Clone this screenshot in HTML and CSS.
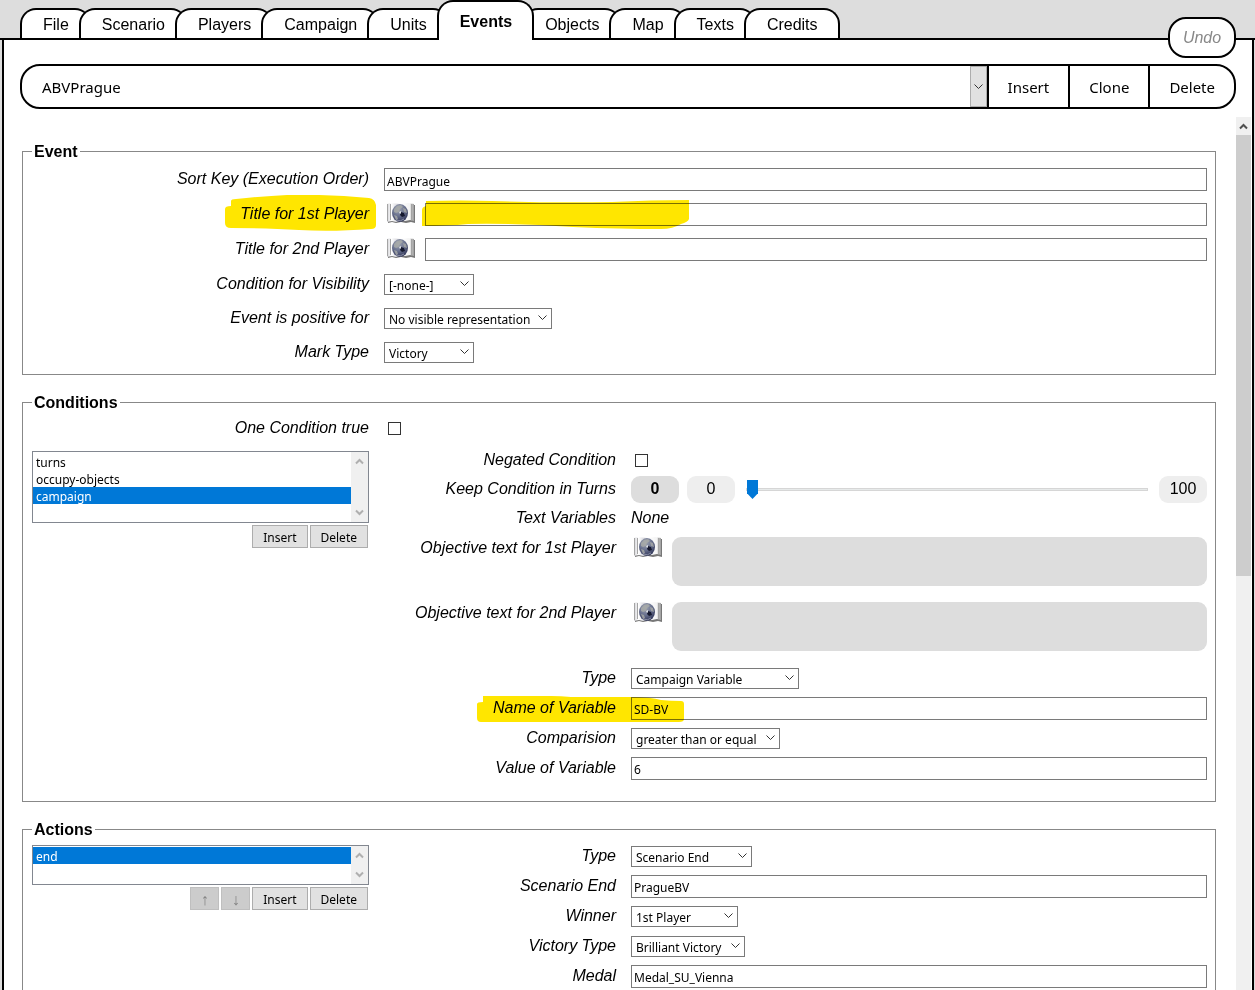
FILE: index.html
```
<!DOCTYPE html>
<html lang="en">
<head>
    <meta charset="UTF-8">
    <meta name="viewport" content="width=device-width, initial-scale=1.0">
    <title>Scenario Editor - Events</title>
    <link rel="stylesheet" href="styles.css">
</head>
<body>
    <!-- shared book icon -->
    <svg class="defs" width="0" height="0" aria-hidden="true">
        <defs>
            <linearGradient id="page-left" x1="0" x2="1" y1="0" y2="0">
                <stop offset="0" stop-color="#d2d2d6"/>
                <stop offset="0.35" stop-color="#ffffff"/>
                <stop offset="1" stop-color="#c4c4cc"/>
            </linearGradient>
            <linearGradient id="page-right" x1="0" x2="1" y1="0" y2="0">
                <stop offset="0" stop-color="#ffffff"/>
                <stop offset="0.7" stop-color="#f4f4f4"/>
                <stop offset="1" stop-color="#8c8c8c"/>
            </linearGradient>
            <radialGradient id="globe" cx="0.4" cy="0.25" r="0.8">
                <stop offset="0" stop-color="#a3a8b4"/>
                <stop offset="0.5" stop-color="#6b7390"/>
                <stop offset="1" stop-color="#2c3154"/>
            </radialGradient>
        </defs>
        <symbol id="book" viewBox="0 0 28 20">
            <path d="M1 2h27v18l-4-1-5 1-5-1-5 1-4-1-4 1z" fill="#777"/>
            <path d="M0 1l4-1 9 1v17l-4 1-4-1-5 1z" fill="url(#page-left)"/>
            <path d="M13 1l8-1 6 1v17l-4-1-5 1-5-1z" fill="url(#page-right)"/>
            <path d="M0.500 1v17M3.500 1v16M24.500 1v16M26.500 1v17" stroke="#a4a4a4" fill="none"/>
            <ellipse cx="13" cy="10" rx="8" ry="9" fill="url(#globe)"/>
            <path d="M7 6l3-3 4-1 2 2-3 2-1 3-3 1-2-1zM16 5l3 1 1 4-3-1zM7 12l3 1 1 3-2 1z" fill="#a9aba8" opacity="0.8"/>
            <path d="M14 9l3 1 1 3-3 1-2-2z" fill="#15182e"/>
            <path d="M12 9l2-1 0 2-1 1z" fill="#dfe2e6"/>
            <path d="M9 17q5 2 8-1" stroke="#b9bdcc" fill="none" opacity="0.6"/>
        </symbol>
    </svg>

    <nav class="tabs">
        <button class="tab">File</button>
        <button class="tab">Scenario</button>
        <button class="tab">Players</button>
        <button class="tab">Campaign</button>
        <button class="tab">Units</button>
        <button class="tab active">Events</button>
        <button class="tab">Objects</button>
        <button class="tab">Map</button>
        <button class="tab">Texts</button>
        <button class="tab">Credits</button>
    </nav>
    <button class="undo" disabled>Undo</button>

    <main class="panel">
        <div class="toolbar">
            <select class="event-select" aria-label="Event">
                <option>ABVPrague</option>
            </select>
            <span class="event-arrow" aria-hidden="true"></span>
            <button>Insert</button>
            <button>Clone</button>
            <button>Delete</button>
        </div>

        <div class="scroll-area">
            <form class="editor">
                <fieldset>
                    <legend>Event</legend>
                    <div class="row">
                        <label for="sort-key">Sort Key (Execution Order)</label>
                        <div class="control"><input type="text" id="sort-key" value="ABVPrague"></div>
                    </div>
                    <div class="row">
                        <label for="title-1">Title for 1st Player
                            <svg class="marker marker-label" viewBox="0 0 152 36" aria-hidden="true"><path d="M0 14q0-3 6-3V6q0-2 5-2Q40 1 62 0q40-1 82 3 6 1 7 7v20q0 4-5 4-40 3-72 1-30-2-68-2-6 0-6-5z"/></svg>
                        </label>
                        <div class="control">
                            <button type="button" class="book" aria-label="Edit texts"><svg width="28" height="20"><use href="#book"/></svg></button>
                            <input type="text" id="title-1">
                            <svg class="marker marker-field" viewBox="0 0 268 29" preserveAspectRatio="none" aria-hidden="true"><path d="M4 6V1Q40 0 70 1q60 2 120 1 40-2 77-2v19q-1 3-8 5-8 5-20 5-40 0-88-2-60-4-105-3-20 2-46 2H0V10q0-3 4-4z"/></svg>
                        </div>
                    </div>
                    <div class="row">
                        <label for="title-2">Title for 2nd Player</label>
                        <div class="control">
                            <button type="button" class="book" aria-label="Edit texts"><svg width="28" height="20"><use href="#book"/></svg></button>
                            <input type="text" id="title-2">
                        </div>
                    </div>
                    <div class="row choice">
                        <label for="visibility">Condition for Visibility</label>
                        <div class="control"><select id="visibility" class="narrow"><option>[-none-]</option></select></div>
                    </div>
                    <div class="row choice">
                        <label for="positive">Event is positive for</label>
                        <div class="control"><select id="positive" class="wide"><option>No visible representation</option></select></div>
                    </div>
                    <div class="row choice">
                        <label for="mark">Mark Type</label>
                        <div class="control"><select id="mark" class="narrow"><option>Victory</option></select></div>
                    </div>
                </fieldset>

                <fieldset class="conditions">
                    <legend>Conditions</legend>
                    <div class="split">
                        <div class="list-column">
                            <div class="row one-true">
                                <label for="one-true">One Condition true</label>
                                <div class="control"><input type="checkbox" id="one-true"></div>
                            </div>
                            <div class="list">
                                <select size="4" class="list-tall" aria-label="Conditions">
                                    <option>turns</option>
                                    <option>occupy-objects</option>
                                    <option selected>campaign</option>
                                </select>
                                <div class="list-scroll"><i class="up"></i><i class="down"></i></div>
                            </div>
                            <div class="list-buttons">
                                <button type="button">Insert</button>
                                <button type="button">Delete</button>
                            </div>
                        </div>
                        <div class="detail">
                            <div class="row">
                                <label for="negated">Negated Condition</label>
                                <div class="control"><input type="checkbox" id="negated"></div>
                            </div>
                            <div class="row">
                                <label for="turns">Keep Condition in Turns</label>
                                <div class="control slider">
                                    <output class="current" for="turns">0</output>
                                    <span>0</span>
                                    <input type="range" id="turns" min="0" max="100" value="0">
                                    <span>100</span>
                                </div>
                            </div>
                            <div class="row">
                                <div class="name">Text Variables</div>
                                <div class="control none">None</div>
                            </div>
                            <div class="row tall">
                                <label for="objective-1">Objective text for 1st Player</label>
                                <div class="control">
                                    <button type="button" class="book" aria-label="Edit texts"><svg width="28" height="20"><use href="#book"/></svg></button>
                                    <textarea id="objective-1" readonly></textarea>
                                </div>
                            </div>
                            <div class="row tall">
                                <label for="objective-2">Objective text for 2nd Player</label>
                                <div class="control">
                                    <button type="button" class="book" aria-label="Edit texts"><svg width="28" height="20"><use href="#book"/></svg></button>
                                    <textarea id="objective-2" readonly></textarea>
                                </div>
                            </div>
                            <div class="row field">
                                <label for="condition-type">Type</label>
                                <div class="control"><select id="condition-type" class="wide"><option>Campaign Variable</option></select></div>
                            </div>
                            <div class="row field">
                                <label for="variable">Name of Variable
                                    <svg class="marker marker-variable" viewBox="0 0 207 28" aria-hidden="true"><path d="M0 9q0-2 6-2V1h68q10 0 20 1h60q20 0 30 3 10 1 20 1 3 0 3 3v15q0 3-5 3H4q-4 0-4-4z"/></svg>
                                </label>
                                <div class="control"><input type="text" id="variable" value="SD-BV"></div>
                            </div>
                            <div class="row field">
                                <label for="comparison">Comparision</label>
                                <div class="control"><select id="comparison" class="medium"><option>greater than or equal</option></select></div>
                            </div>
                            <div class="row field">
                                <label for="variable-value">Value of Variable</label>
                                <div class="control"><input type="text" id="variable-value" value="6"></div>
                            </div>
                        </div>
                    </div>
                </fieldset>

                <fieldset class="actions">
                    <legend>Actions</legend>
                    <div class="split">
                        <div class="list-column">
                            <div class="list">
                                <select size="2" class="list-short" aria-label="Actions">
                                    <option selected>end</option>
                                </select>
                                <div class="list-scroll"><i class="up"></i><i class="down"></i></div>
                            </div>
                            <div class="list-buttons">
                                <button type="button" class="move" disabled>↑</button>
                                <button type="button" class="move" disabled>↓</button>
                                <button type="button">Insert</button>
                                <button type="button">Delete</button>
                            </div>
                        </div>
                        <div class="detail">
                            <div class="row field">
                                <label for="action-type">Type</label>
                                <div class="control"><select id="action-type" class="small"><option>Scenario End</option></select></div>
                            </div>
                            <div class="row field">
                                <label for="scenario-end">Scenario End</label>
                                <div class="control"><input type="text" id="scenario-end" value="PragueBV"></div>
                            </div>
                            <div class="row field">
                                <label for="winner">Winner</label>
                                <div class="control"><select id="winner" class="winner"><option>1st Player</option></select></div>
                            </div>
                            <div class="row field">
                                <label for="victory-type">Victory Type</label>
                                <div class="control"><select id="victory-type" class="victory"><option>Brilliant Victory</option></select></div>
                            </div>
                            <div class="row field">
                                <label for="medal">Medal</label>
                                <div class="control"><input type="text" id="medal" value="Medal_SU_Vienna"></div>
                            </div>
                        </div>
                    </div>
                </fieldset>
            </form>
            <div class="scrollbar" aria-hidden="true">
                <i class="up"></i>
                <div class="thumb"></div>
            </div>
        </div>
    </main>
</body>
</html>
```

FILE: styles.css
```
* {
    box-sizing: border-box;
}
body {
    margin: 0;
    height: 100vh;
    overflow: hidden;
    display: flex;
    flex-direction: column;
    position: relative;
    background: #ddd;
    color: #000;
    font: 16px/18px "Liberation Sans", Arial, sans-serif;
}
button, input, select, textarea {
    margin: 0;
    color: #000;
    font: 12px/15px "Noto Sans", Tahoma, sans-serif;
}
.defs {
    position: absolute;
}

/* tabs */
.tabs {
    display: flex;
    align-items: flex-end;
    height: 40px;
    flex: none;
    padding-left: 20px;
    border-bottom: 2px solid #000;
}
.tab {
    position: relative;
    height: 30px;
    margin-left: -12px;
    padding: 2px 20px 0 21px;
    border: 2px solid #000;
    border-bottom: none;
    border-radius: 16px 16px 0 0;
    background: #fff;
    font: 16px/18px "Liberation Sans", Arial, sans-serif;
}
.tab:first-child {
    margin-left: 0;
}
.tab.active {
    z-index: 1;
    height: 40px;
    margin-bottom: -2px;
    font-weight: bold;
}
.undo {
    position: absolute;
    top: 17px;
    right: 19px;
    width: 68px;
    height: 41px;
    border: 2px solid #000;
    border-radius: 18px;
    background: #fff;
    color: #888;
    font: italic 16px/18px "Liberation Sans", Arial, sans-serif;
}

.panel {
    flex: 1;
    min-height: 0;
    display: flex;
    flex-direction: column;
    margin: 0 1px 0 2px;
    padding-top: 24px;
    border: solid #000;
    border-width: 0 2px;
    background: #fff;
}

/* event picker */
.toolbar {
    display: flex;
    flex: none;
    height: 45px;
    margin: 0 16px;
    border: 2px solid #000;
    border-radius: 20px;
    overflow: hidden;
}
.toolbar select, .toolbar button {
    border: none;
    background: none;
    font: 15px/20px "Noto Sans", Tahoma, sans-serif;
}
.toolbar button {
    padding: 0 19px;
    border-left: 2px solid #000;
}
.event-select {
    flex: 1;
    appearance: none;
    padding: 0 20px;
}
.event-arrow {
    width: 17px;
    border: 1px solid #adadad;
    background: #e1e1e1 url("data:image/svg+xml,%3Csvg xmlns='http://www.w3.org/2000/svg' width='9' height='6'%3E%3Cpath d='M.5 .5l4 4 4-4' fill='none' stroke='%23333'/%3E%3C/svg%3E") no-repeat center;
}

.scroll-area {
    flex: 1;
    min-height: 0;
    display: flex;
    margin-top: 8px;
}
.editor {
    flex: 1;
    min-width: 0;
    overflow: hidden;
    padding: 24px 20px 0 18px;
}
.scrollbar {
    flex: none;
    width: 15px;
    margin-right: 1px;
    background: #f0f0f0;
}
.thumb {
    height: 441px;
    background: #cdcdcd;
}
.up, .down {
    display: block;
    height: 18px;
    background: url("data:image/svg+xml,%3Csvg xmlns='http://www.w3.org/2000/svg' width='9' height='7'%3E%3Cpath d='M1 5.500l3.500-3.500 3.500 3.500' fill='none' stroke='%23505050' stroke-width='2'/%3E%3C/svg%3E") no-repeat center;
}
.down {
    transform: scaleY(-1);
}

fieldset {
    min-width: 0;
    margin: 0 0 17px;
    padding: 1px 8px 5px 9px;
    border: 1px solid #888;
}
legend {
    padding: 2px 2px 0;
    font-weight: bold;
}

/* label + control rows */
.row {
    display: flex;
    gap: 15px;
    height: 35px;
}
.row.choice {
    height: 34px;
}
.row label, .row .name {
    position: relative;
    flex: none;
    width: 337px;
    align-self: center;
    padding-bottom: 1px;
    text-align: right;
    font-style: italic;
}
.control {
    position: relative;
    flex: 1;
    min-width: 0;
    display: flex;
    align-items: center;
}
input[type="text"] {
    flex: 1;
    min-width: 0;
    height: 23px;
    padding: 3px 2px 0;
    border: 1px solid #7a7a7a;
    border-radius: 0;
    background: #fff;
}
.control select {
    appearance: none;
    height: 21px;
    padding: 2px 16px 0 4px;
    border: 1px solid #7a7a7a;
    border-radius: 0;
    background: #fff url("data:image/svg+xml,%3Csvg xmlns='http://www.w3.org/2000/svg' width='9' height='6'%3E%3Cpath d='M.5 .5l4 4 4-4' fill='none' stroke='%23333'/%3E%3C/svg%3E") no-repeat right 4px center;
}
.control .narrow { width: 90px; }
.control .winner { width: 107px; }
.control .victory { width: 114px; }
.control .small { width: 121px; }
.control .medium { width: 149px; }
.control .wide { width: 168px; }
input[type="checkbox"] {
    appearance: none;
    width: 13px;
    height: 13px;
    margin-left: 4px;
    border: 1px solid #333;
    background: #fff;
}
.book {
    flex: none;
    width: 41px;
    padding: 0 0 3px 3px;
    border: none;
    background: none;
    text-align: left;
}
.book svg {
    display: block;
}

/* yellow highlighter */
.marker {
    position: absolute;
    z-index: 1;
    fill: #ffe600;
    mix-blend-mode: multiply;
    pointer-events: none;
}
.marker-label {
    top: -10px;
    right: -8px;
    width: 152px;
    height: 36px;
}
.marker-field {
    top: 3px;
    left: 38px;
    width: 268px;
    height: 29px;
}
.marker-variable {
    top: -4px;
    right: -68px;
    width: 207px;
    height: 28px;
}

/* list on the left, details on the right */
.split {
    display: flex;
}
.list-column {
    flex: none;
    width: 337px;
}
.one-true {
    height: 38px;
    width: 380px;
    padding-bottom: 8px;
}
.detail {
    flex: 1;
    min-width: 0;
}
.detail .row {
    height: 29px;
}
.detail .row label, .detail .row .name {
    width: 247px;
}
.detail .row.field {
    height: 30px;
}
.detail .row.tall {
    height: 65px;
    padding-top: 4px;
}
.detail .tall label {
    align-self: flex-start;
    padding: 2px 0 0;
}
.detail .tall .control {
    align-items: flex-start;
}
.none {
    font-style: italic;
    padding-bottom: 1px;
}
textarea {
    flex: 1;
    height: 49px;
    border: none;
    border-radius: 9px;
    background: #ddd;
    resize: none;
}
.conditions {
    padding-bottom: 18px;
}
.conditions .detail {
    padding-top: 33px;
}
.actions {
    padding-top: 2px;
}
.actions .list-column {
    padding-top: 4px;
}

.list {
    display: flex;
    border: 1px solid #828790;
    background: #fff;
}
.list select {
    flex: 1;
    min-width: 0;
    padding: 1px 0 0;
    border: none;
    border-radius: 0;
    outline: none;
    overflow: hidden;
    background: #fff;
}
.list-tall {
    height: 70px;
}
.list-short {
    height: 38px;
}
.list option {
    height: 17px;
    min-height: 17px;
    padding: 1px 3px 0;
}
.list option:checked {
    background: #0078d7 linear-gradient(#0078d7, #0078d7);
    color: #fff;
    -webkit-text-fill-color: #fff;
}
.list-scroll {
    display: flex;
    flex-direction: column;
    justify-content: space-between;
    width: 17px;
    background: #f0f0f0;
}
.list-scroll i {
    opacity: 0.4;
}
.list-buttons {
    display: flex;
    justify-content: flex-end;
    gap: 2px;
    padding: 2px 1px 0 0;
}
.list-buttons button {
    height: 23px;
    padding: 1px 10px 0;
    border: 1px solid #adadad;
    background: #e1e1e1;
}
.list-buttons .move {
    width: 29px;
    padding: 2px 0 0;
    border-color: #bfbfbf;
    background: #ccc;
    color: #838383;
    font-size: 16px;
}

.slider output, .slider span {
    flex: none;
    width: 48px;
    margin-right: 8px;
    padding: 4px 0 5px;
    border-radius: 9px;
    background: #eee;
    text-align: center;
}
.slider .current {
    background: #ddd;
    font-weight: bold;
}
.slider span:last-child {
    margin-right: 0;
}
input[type="range"] {
    appearance: none;
    flex: 1;
    min-width: 0;
    height: 20px;
    margin: 0 11px 0 3px;
    background: none;
}
input[type="range"]::-webkit-slider-runnable-track {
    height: 3px;
    border: 1px solid #d6d6d6;
    background: #e7eaea;
}
input[type="range"]::-webkit-slider-thumb {
    appearance: none;
    width: 11px;
    height: 19px;
    margin-top: -9px;
    background: #0078d7;
    clip-path: polygon(0 0, 100% 0, 100% 70%, 50% 100%, 0 70%);
}
```
